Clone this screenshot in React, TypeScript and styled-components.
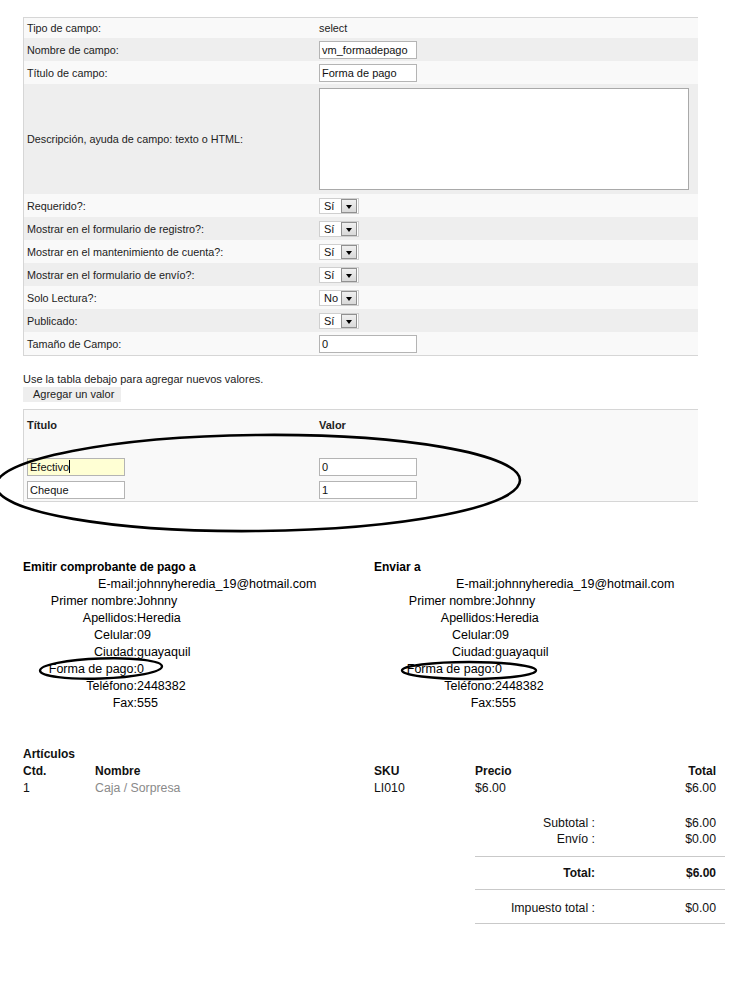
import React from "react";
import styled, { createGlobalStyle } from "styled-components";

const GlobalStyle = createGlobalStyle`
  html, body { margin: 0; padding: 0; background: #ffffff; }
  body {
    font-family: "Liberation Sans", Arial, sans-serif;
    color: #222222;
    overflow-x: hidden;
  }
  * { box-sizing: border-box; }
`;

const Page = styled.div`
  width: 749px;
  padding: 17px 0 60px 23px;
`;

/* ---------- field form table ---------- */

const FormTable = styled.div`
  width: 675px;
  border: 1px solid #d6d6d6;
  border-right: none;
  font-size: 10.8px;
  color: #222;
`;

const FormRow = styled.div<{ $alt?: boolean; $h: number; $pad?: number }>`
  display: grid;
  grid-template-columns: 295px 1fr;
  align-items: center;
  min-height: ${(p) => p.$h}px;
  padding: ${(p) => p.$pad ?? 0}px 0;
  background: ${(p) => (p.$alt ? "#eeeeee" : "#f9f9f9")};
`;

const Label = styled.div<{ $bold?: boolean }>`
  padding-left: 3px;
  font-weight: ${(p) => (p.$bold ? "bold" : "normal")};
`;

const Value = styled.div<{ $bold?: boolean }>`
  display: flex;
  align-items: center;
  font-weight: ${(p) => (p.$bold ? "bold" : "normal")};
`;

const Field = styled.span<{ $focus?: boolean }>`
  display: inline-flex;
  align-items: center;
  width: 98px;
  height: 18px;
  padding-left: 2px;
  border: 1px solid #b4b4b4;
  background: ${(p) => (p.$focus ? "#ffffd4" : "#ffffff")};
  font-size: 11px;
  font-weight: normal;
  color: #111;
  white-space: nowrap;
`;

const Caret = styled.span`
  display: inline-block;
  width: 1px;
  height: 13px;
  background: #000;
`;

const TextArea = styled.div`
  width: 370px;
  height: 102px;
  border: 1px solid #a9a9a9;
  background: #ffffff;
`;

const SelectBox = styled.span`
  display: inline-flex;
  align-items: center;
  width: 40px;
  height: 16px;
  border: 1px solid #cfcfcf;
  background: #ffffff;
`;

const SelectText = styled.span`
  flex: 1;
  padding-left: 4px;
  font-size: 11px;
  line-height: 14px;
  color: #111;
`;

const SelectButton = styled.span`
  width: 16px;
  height: 14px;
  margin-right: 1px;
  border: 1px solid #909090;
  background: linear-gradient(#f0f0f0, #d9d9d9);
  display: flex;
  align-items: center;
  justify-content: center;
  &::after {
    content: "";
    display: block;
    margin-top: 2px;
    border-left: 3.5px solid transparent;
    border-right: 3.5px solid transparent;
    border-top: 4px solid #000;
  }
`;

const Select = ({ value }: { value: string }) => (
  <SelectBox>
    <SelectText>{value}</SelectText>
    <SelectButton />
  </SelectBox>
);

/* ---------- values section ---------- */

const Hint = styled.div`
  margin-top: 17px;
  font-size: 11px;
  line-height: 13px;
  color: #222;
`;

const AddButton = styled.div`
  width: fit-content;
  margin-top: 1px;
  height: 15px;
  padding: 0 7px 0 10px;
  background: #eeeeee;
  font-size: 11px;
  line-height: 15px;
  color: #222;
`;

const ValuesWrap = styled.div`
  position: relative;
  margin-top: 7px;
`;

const ValuesTable = styled.div`
  width: 675px;
  border: 1px solid #d6d6d6;
  border-right: none;
  background: #f9f9f9;
  font-size: 11px;
  color: #222;
`;

const Spacer = styled.div<{ $h: number }>`
  height: ${(p) => p.$h}px;
`;

const Annotation = styled.svg<{ $left: number; $top: number }>`
  position: absolute;
  left: ${(p) => p.$left}px;
  top: ${(p) => p.$top}px;
  overflow: visible;
  pointer-events: none;
`;

/* ---------- address section ---------- */

const AddressGrid = styled.div`
  margin-top: 57px;
  display: grid;
  grid-template-columns: 351px 1fr;
  font-size: 12.5px;
  line-height: 17px;
  color: #000;
`;

const Block = styled.div``;

const BlockTitle = styled.div`
  font-weight: bold;
  font-size: 12px;
`;

const InfoRow = styled.div<{ $labelWidth: number }>`
  position: relative;
  display: grid;
  grid-template-columns: ${(p) => p.$labelWidth}px 1fr;
  white-space: nowrap;
`;

const InfoLabel = styled.span`
  text-align: right;
`;

const InfoValue = styled.span``;

/* ---------- items ---------- */

const Items = styled.div`
  margin-top: 34px;
  width: 702px;
  font-size: 12px;
  line-height: 17px;
  color: #111;
`;

const ItemsTitle = styled.div`
  font-weight: bold;
`;

const ItemsGrid = styled.div`
  display: grid;
  grid-template-columns: 72px 279px 101px 1fr 1fr;
  padding-right: 9px;
`;

const Cell = styled.span<{ $bold?: boolean; $right?: boolean; $muted?: boolean }>`
  font-weight: ${(p) => (p.$bold ? "bold" : "normal")};
  text-align: ${(p) => (p.$right ? "right" : "left")};
  color: ${(p) => (p.$muted ? "#8a8a8a" : "#111")};
  font-size: ${(p) => (p.$bold ? "12px" : "12.3px")};
`;

const Totals = styled.div`
  margin-top: 18px;
  margin-left: 452px;
  width: 250px;
`;

const TotalsSection = styled.div<{ $pt: number; $pb: number }>`
  padding: ${(p) => p.$pt}px 0 ${(p) => p.$pb}px;
  border-bottom: 1px solid #c9c9c9;
`;

const TotalsRow = styled.div<{ $bold?: boolean }>`
  display: grid;
  grid-template-columns: 120px 1fr;
  padding-right: 9px;
  font-weight: ${(p) => (p.$bold ? "bold" : "normal")};
  font-size: ${(p) => (p.$bold ? "12px" : "12.3px")};
  line-height: 16px;
  & > span { text-align: right; }
`;

/* ---------- data ---------- */

const selects: [string, string][] = [
  ["Requerido?:", "Sí"],
  ["Mostrar en el formulario de registro?:", "Sí"],
  ["Mostrar en el mantenimiento de cuenta?:", "Sí"],
  ["Mostrar en el formulario de envío?:", "Sí"],
  ["Solo Lectura?:", "No"],
  ["Publicado:", "Sí"],
];

const info: [string, string][] = [
  ["E-mail:", "johnnyheredia_19@hotmail.com"],
  ["Primer nombre:", "Johnny"],
  ["Apellidos:", "Heredia"],
  ["Celular:", "09"],
  ["Ciudad:", "guayaquil"],
  ["Forma de pago:", "0"],
  ["Teléfono:", "2448382"],
  ["Fax:", "555"],
];

type Ring = { left: number; top: number; w: number; h: number; rx: number; ry: number; rot: number };

const AddressBlock = ({
  title,
  labelWidth,
  ring,
}: {
  title: string;
  labelWidth: number;
  ring: Ring;
}) => (
  <Block>
    <BlockTitle>{title}</BlockTitle>
    {info.map(([l, v]) => (
      <InfoRow key={l} $labelWidth={labelWidth}>
        <InfoLabel>{l}</InfoLabel>
        <InfoValue>{v}</InfoValue>
        {l === "Forma de pago:" && (
          <Annotation $left={ring.left} $top={ring.top} width={ring.w} height={ring.h}>
            <ellipse
              cx={ring.w / 2}
              cy={ring.h / 2}
              rx={ring.rx}
              ry={ring.ry}
              fill="none"
              stroke="#000"
              strokeWidth={2.4}
              transform={`rotate(${ring.rot} ${ring.w / 2} ${ring.h / 2})`}
            />
          </Annotation>
        )}
      </InfoRow>
    ))}
  </Block>
);

export default function App() {
  return (
    <>
      <GlobalStyle />
      <Page>
        <FormTable>
          <FormRow $h={20}>
            <Label>Tipo de campo:</Label>
            <Value>select</Value>
          </FormRow>
          <FormRow $h={23} $alt>
            <Label>Nombre de campo:</Label>
            <Value>
              <Field>vm_formadepago</Field>
            </Value>
          </FormRow>
          <FormRow $h={23}>
            <Label>Título de campo:</Label>
            <Value>
              <Field>Forma de pago</Field>
            </Value>
          </FormRow>
          <FormRow $h={110} $pad={4} $alt>
            <Label>Descripción, ayuda de campo: texto o HTML:</Label>
            <Value>
              <TextArea />
            </Value>
          </FormRow>
          {selects.map(([l, v], i) => (
            <FormRow key={l} $h={23} $alt={i % 2 === 1}>
              <Label>{l}</Label>
              <Value>
                <Select value={v} />
              </Value>
            </FormRow>
          ))}
          <FormRow $h={23}>
            <Label>Tamaño de Campo:</Label>
            <Value>
              <Field>0</Field>
            </Value>
          </FormRow>
        </FormTable>

        <Hint>Use la tabla debajo para agregar nuevos valores.</Hint>
        <AddButton>Agregar un valor</AddButton>

        <ValuesWrap>
          <ValuesTable>
            <FormRow $h={30}>
              <Label $bold>Título</Label>
              <Value $bold>Valor</Value>
            </FormRow>
            <Spacer $h={15} />
            <FormRow $h={23}>
              <Label>
                <Field $focus>
                  Efectivo
                  <Caret />
                </Field>
              </Label>
              <Value>
                <Field>0</Field>
              </Value>
            </FormRow>
            <FormRow $h={23}>
              <Label>
                <Field>Cheque</Field>
              </Label>
              <Value>
                <Field>1</Field>
              </Value>
            </FormRow>
          </ValuesTable>
          <Annotation $left={-30} $top={23} width={530} height={102}>
            <ellipse
              cx={265}
              cy={51}
              rx={262}
              ry={48}
              fill="none"
              stroke="#000"
              strokeWidth={2.6}
              transform="rotate(-0.6 265 51)"
            />
          </Annotation>
        </ValuesWrap>

        <AddressGrid>
          <AddressBlock
            title="Emitir comprobante de pago a"
            labelWidth={114}
            ring={{ left: 14, top: -5, w: 128, h: 25, rx: 61, ry: 10, rot: -2 }}
          />
          <AddressBlock
            title="Enviar a"
            labelWidth={121}
            ring={{ left: 25, top: -1, w: 140, h: 21, rx: 67, ry: 8.5, rot: 0 }}
          />
        </AddressGrid>

        <Items>
          <ItemsTitle>Artículos</ItemsTitle>
          <ItemsGrid>
            <Cell $bold>Ctd.</Cell>
            <Cell $bold>Nombre</Cell>
            <Cell $bold>SKU</Cell>
            <Cell $bold>Precio</Cell>
            <Cell $bold $right>
              Total
            </Cell>
            <Cell>1</Cell>
            <Cell $muted>Caja / Sorpresa</Cell>
            <Cell>LI010</Cell>
            <Cell>$6.00</Cell>
            <Cell $right>$6.00</Cell>
          </ItemsGrid>
          <Totals>
            <TotalsSection $pt={0} $pb={9}>
              <TotalsRow>
                <span>Subtotal :</span>
                <span>$6.00</span>
              </TotalsRow>
              <TotalsRow>
                <span>Envío :</span>
                <span>$0.00</span>
              </TotalsRow>
            </TotalsSection>
            <TotalsSection $pt={8} $pb={8}>
              <TotalsRow $bold>
                <span>Total:</span>
                <span>$6.00</span>
              </TotalsRow>
            </TotalsSection>
            <TotalsSection $pt={10} $pb={7}>
              <TotalsRow>
                <span>Impuesto total :</span>
                <span>$0.00</span>
              </TotalsRow>
            </TotalsSection>
          </Totals>
        </Items>
      </Page>
    </>
  );
}
